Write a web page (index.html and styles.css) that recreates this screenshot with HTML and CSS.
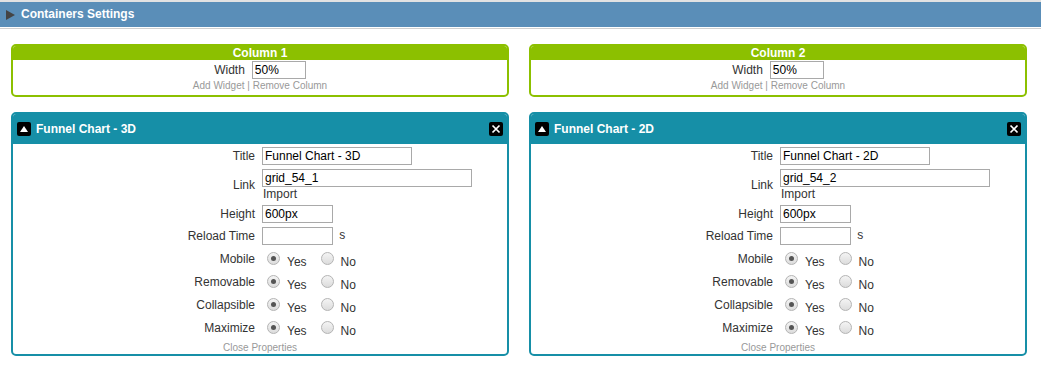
FILE: index.html
```html
<!DOCTYPE html>
<html lang="en">
<head>
    <meta charset="UTF-8">
    <title>Containers Settings</title>
    <link rel="stylesheet" href="styles.css">
</head>
<body>
    <div class="settings">
        <div class="settings-bar"><span class="caret"></span>Containers Settings</div>
    </div>

    <div class="columns">
        <div class="column">
            <div class="column-box">
                <div class="column-head">Column 1</div>
                <div class="column-body">
                    <div class="width-row"><label>Width</label> <input class="field field-width" type="text" value="50%"></div>
                    <div class="column-links"><a href="#">Add Widget</a> | <a href="#">Remove Column</a></div>
                </div>
            </div>

            <div class="widget">
                <div class="widget-head">
                    <span class="icon"><svg width="14" height="14" viewBox="0 0 14 14"><rect width="14" height="14" rx="2" fill="#000"/><polygon points="3,10 11,10 7,4" fill="#fff"/></svg></span>
                    <span class="widget-title">Funnel Chart - 3D</span>
                    <span class="icon icon-close"><svg width="14" height="14" viewBox="0 0 14 14"><rect width="14" height="14" rx="2" fill="#000"/><path d="M3.5 3.5 L10.5 10.5 M10.5 3.5 L3.5 10.5" stroke="#fff" stroke-width="1.7"/></svg></span>
                </div>
                <div class="widget-body">
                    <div class="props">
                        <label>Title</label>
                        <div><input class="field field-title" type="text" value="Funnel Chart - 3D"></div>

                        <label>Link</label>
                        <div><input class="field field-link" type="text" value="grid_54_1"><div class="import">Import</div></div>

                        <label>Height</label>
                        <div><input class="field field-short" type="text" value="600px"></div>

                        <label>Reload Time</label>
                        <div><input class="field field-short" type="text" value=""> <span class="unit">s</span></div>

                        <label class="radio-label">Mobile</label>
                        <div class="radios"><input type="radio" name="m1" checked><span>Yes</span><input type="radio" name="m1"><span>No</span></div>

                        <label class="radio-label">Removable</label>
                        <div class="radios"><input type="radio" name="r1" checked><span>Yes</span><input type="radio" name="r1"><span>No</span></div>

                        <label class="radio-label">Collapsible</label>
                        <div class="radios"><input type="radio" name="c1" checked><span>Yes</span><input type="radio" name="c1"><span>No</span></div>

                        <label class="radio-label">Maximize</label>
                        <div class="radios"><input type="radio" name="x1" checked><span>Yes</span><input type="radio" name="x1"><span>No</span></div>
                    </div>
                    <div class="close-props"><a href="#">Close Properties</a></div>
                </div>
            </div>
        </div>

        <div class="column">
            <div class="column-box">
                <div class="column-head">Column 2</div>
                <div class="column-body">
                    <div class="width-row"><label>Width</label> <input class="field field-width" type="text" value="50%"></div>
                    <div class="column-links"><a href="#">Add Widget</a> | <a href="#">Remove Column</a></div>
                </div>
            </div>

            <div class="widget">
                <div class="widget-head">
                    <span class="icon"><svg width="14" height="14" viewBox="0 0 14 14"><rect width="14" height="14" rx="2" fill="#000"/><polygon points="3,10 11,10 7,4" fill="#fff"/></svg></span>
                    <span class="widget-title">Funnel Chart - 2D</span>
                    <span class="icon icon-close"><svg width="14" height="14" viewBox="0 0 14 14"><rect width="14" height="14" rx="2" fill="#000"/><path d="M3.5 3.5 L10.5 10.5 M10.5 3.5 L3.5 10.5" stroke="#fff" stroke-width="1.7"/></svg></span>
                </div>
                <div class="widget-body">
                    <div class="props">
                        <label>Title</label>
                        <div><input class="field field-title" type="text" value="Funnel Chart - 2D"></div>

                        <label>Link</label>
                        <div><input class="field field-link" type="text" value="grid_54_2"><div class="import">Import</div></div>

                        <label>Height</label>
                        <div><input class="field field-short" type="text" value="600px"></div>

                        <label>Reload Time</label>
                        <div><input class="field field-short" type="text" value=""> <span class="unit">s</span></div>

                        <label class="radio-label">Mobile</label>
                        <div class="radios"><input type="radio" name="m2" checked><span>Yes</span><input type="radio" name="m2"><span>No</span></div>

                        <label class="radio-label">Removable</label>
                        <div class="radios"><input type="radio" name="r2" checked><span>Yes</span><input type="radio" name="r2"><span>No</span></div>

                        <label class="radio-label">Collapsible</label>
                        <div class="radios"><input type="radio" name="c2" checked><span>Yes</span><input type="radio" name="c2"><span>No</span></div>

                        <label class="radio-label">Maximize</label>
                        <div class="radios"><input type="radio" name="x2" checked><span>Yes</span><input type="radio" name="x2"><span>No</span></div>
                    </div>
                    <div class="close-props"><a href="#">Close Properties</a></div>
                </div>
            </div>
        </div>
    </div>
</body>
</html>
```

FILE: styles.css
```css
:root {
    --bar: #5a8eb8;
    --green: #8cc000;
    --teal: #168fa7;
    --text: #333333;
    --muted: #999999;
    --field-border: #a9a9a9;
}

* {
    margin: 0;
    padding: 0;
    box-sizing: border-box;
}

body {
    background: #fff;
    color: var(--text);
    font-family: 'Liberation Sans', Arial, sans-serif;
    font-size: 12px;
}

.settings {
    border-bottom: 1px solid #cfcfcf;
    padding-bottom: 1px;
}

.settings-bar {
    border-top: 2px solid #e2e2e2;
    background: var(--bar);
    height: 27px;
    line-height: 25px;
    padding-left: 6px;
    color: #fff;
    font-weight: bold;
    display: flex;
    align-items: center;
}

.caret {
    width: 0;
    height: 0;
    border-left: 9px solid #444;
    border-top: 5px solid transparent;
    border-bottom: 5px solid transparent;
    margin-right: 6px;
}

.columns {
    display: grid;
    grid-template-columns: 498px 498px;
    column-gap: 20px;
    padding: 15px 0 0 11px;
}

.column-box {
    border: 2px solid var(--green);
    border-radius: 5px;
    overflow: hidden;
}

.column-head {
    background: var(--green);
    color: #fff;
    font-weight: bold;
    text-align: center;
    height: 14px;
    line-height: 14px;
}

.column-body {
    padding: 1px 0 2px;
    text-align: center;
}

.width-row {
    height: 18px;
    display: flex;
    justify-content: center;
    align-items: center;
    gap: 7px;
}

.column-links {
    line-height: 14px;
    font-size: 10px;
    color: var(--muted);
}

.column-links a,
.close-props a {
    color: var(--muted);
    text-decoration: none;
}

.field {
    height: 18px;
    border: 1px solid var(--field-border);
    padding: 0 2px;
    font-family: 'Liberation Sans', Arial, sans-serif;
    font-size: 12px;
    color: #000;
    outline: none;
    vertical-align: middle;
}

.field-width { width: 54px; }
.field-title { width: 150px; }
.field-link { width: 210px; }
.field-short { width: 71px; }

.widget {
    margin-top: 15px;
    border: 2px solid var(--teal);
    border-radius: 5px;
    overflow: hidden;
}

.widget-head {
    background: var(--teal);
    height: 30px;
    display: flex;
    align-items: center;
    padding: 0 4px;
    color: #fff;
    font-weight: bold;
}

.icon {
    display: flex;
    width: 14px;
    height: 14px;
}

.widget-title {
    margin-left: 5px;
    flex: 1;
}

.widget-body {
    padding-top: 3px;
}

.props {
    display: grid;
    grid-template-columns: 1fr 1fr;
    column-gap: 7px;
    row-gap: 4px;
    padding-right: 3px;
    align-items: center;
}

.props label {
    text-align: right;
}

.import {
    line-height: 14px;
    padding-left: 1px;
}

.unit {
    margin-left: 3px;
}

.radios {
    height: 19px;
    display: flex;
    align-items: center;
}

.radios input {
    appearance: none;
    width: 13px;
    height: 13px;
    border: 1px solid #b4b4b4;
    border-radius: 50%;
    background: linear-gradient(#f4f4f4, #dcdcdc);
    margin: 0 7px 0 5px;
    position: relative;
}

.radios input:checked::after {
    content: "";
    position: absolute;
    left: 3px;
    top: 3px;
    width: 5px;
    height: 5px;
    border-radius: 50%;
    background: #555;
}

.radios span {
    position: relative;
    top: 3px;
    margin-right: 9px;
}

.close-props {
    margin-top: 5px;
    text-align: center;
    font-size: 10px;
    line-height: 12px;
}
```
